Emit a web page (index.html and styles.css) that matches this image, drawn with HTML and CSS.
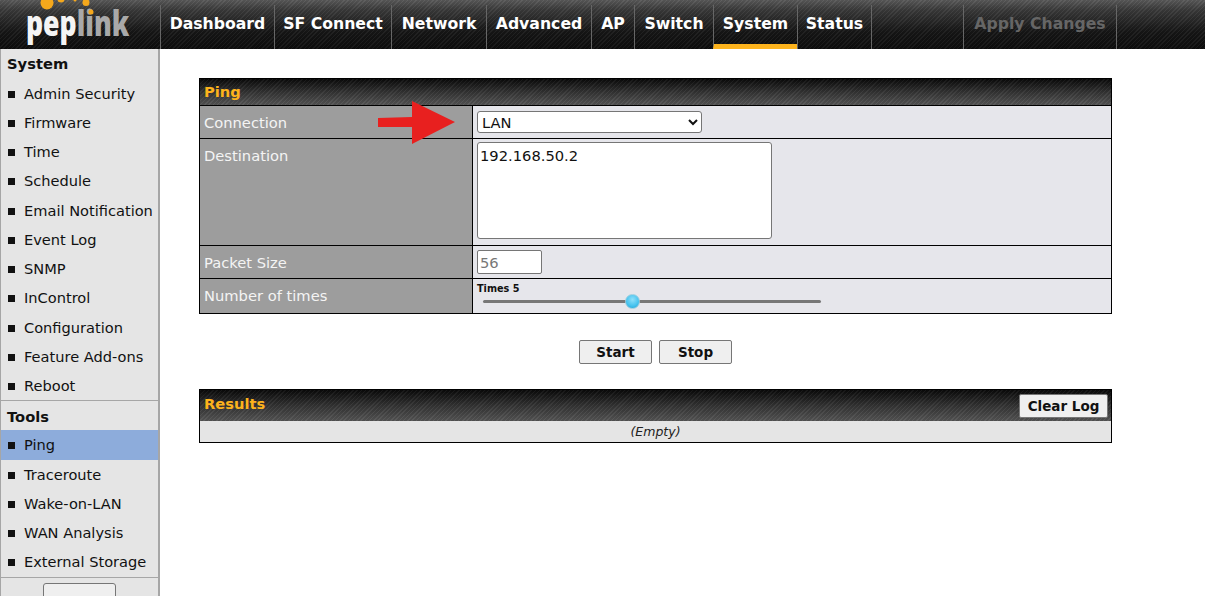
FILE: index.html
```html
<!DOCTYPE html>
<html lang="en">
<head>
<meta charset="utf-8">
<title>Ping</title>
<link rel="stylesheet" href="styles.css">
</head>
<body>
<header class="topbar">
  <div class="logo">
    <span class="logo-text"><span class="logo-pep">pep</span><span class="logo-link">link</span></span>
    <svg class="logo-dots" width="160" height="20" viewBox="0 0 160 20" aria-hidden="true">
      <circle cx="47" cy="3" r="6.5" fill="#f5a81c"/>
      <circle cx="61" cy="-1" r="3.5" fill="#f5a81c"/>
      <circle cx="75" cy="0" r="1.5" fill="#f5a81c"/>
      <circle cx="86" cy="2.5" r="3.5" fill="#f5a81c"/>
      <circle cx="91" cy="12" r="2.5" fill="#f5a81c"/>
    </svg>
  </div>
  <nav class="mainnav">
    <a class="navitem w-dash">Dashboard</a>
    <a class="navitem w-sf">SF Connect</a>
    <a class="navitem w-net">Network</a>
    <a class="navitem w-adv">Advanced</a>
    <a class="navitem w-ap">AP</a>
    <a class="navitem w-sw">Switch</a>
    <a class="navitem w-sys active">System</a>
    <a class="navitem w-st">Status</a>
    <span class="navgap"></span>
    <a class="navitem w-apply disabled">Apply Changes</a>
  </nav>
</header>
<div class="layout">
  <aside class="sidebar">
    <h3 class="side-head">System</h3>
    <ul class="side-list">
      <li>Admin Security</li>
      <li>Firmware</li>
      <li>Time</li>
      <li>Schedule</li>
      <li>Email Notification</li>
      <li>Event Log</li>
      <li>SNMP</li>
      <li>InControl</li>
      <li>Configuration</li>
      <li>Feature Add-ons</li>
      <li>Reboot</li>
    </ul>
    <h3 class="side-head ruled">Tools</h3>
    <ul class="side-list">
      <li class="current">Ping</li>
      <li>Traceroute</li>
      <li>Wake-on-LAN</li>
      <li>WAN Analysis</li>
      <li>External Storage</li>
    </ul>
    <div class="side-foot"><button class="side-btn" type="button"></button></div>
  </aside>
  <main class="content">
    <section class="panel">
      <div class="panel-title">Ping</div>
      <div class="row row-conn">
        <div class="label">Connection</div>
        <div class="field"><select class="select"><option>LAN</option></select></div>
      </div>
      <div class="row row-dest">
        <div class="label">Destination</div>
        <div class="field"><textarea class="textarea">192.168.50.2</textarea></div>
      </div>
      <div class="row row-size">
        <div class="label">Packet Size</div>
        <div class="field"><input class="input" type="text" value="56" disabled></div>
      </div>
      <div class="row row-times">
        <div class="label">Number of times</div>
        <div class="field field-slider">
          <div class="slider-label">Times 5</div>
          <div class="slider"><span class="slider-knob"></span></div>
        </div>
      </div>
      <svg class="arrow" width="78" height="44" viewBox="0 0 78 44" aria-hidden="true">
        <path d="M0 17 L34 16 L34 0 L77 21 L34 43 L34 26 L0 26 Z" fill="#e8201f"/>
      </svg>
    </section>
    <div class="actions">
      <button class="btn" type="button">Start</button>
      <button class="btn" type="button">Stop</button>
    </div>
    <section class="panel panel-results">
      <div class="panel-title title-results"><span class="results-text">Results</span><button class="btn btn-clear" type="button">Clear Log</button></div>
      <div class="empty">(Empty)</div>
    </section>
  </main>
</div>
</body>
</html>
```

FILE: styles.css
```css
* { box-sizing: border-box; }
html, body { margin: 0; height: 596px; overflow: hidden; background: #fff; }
body { font-family: "DejaVu Sans", Verdana, sans-serif; font-size: 14.7px; color: #111; }

.topbar {
  height: 49px;
  display: flex;
  background:
    repeating-linear-gradient(135deg, rgba(255,255,255,.05) 0 1px, rgba(0,0,0,.06) 1px 3px),
    linear-gradient(#5a5a5a, #3a3a3a 20%, #161616 65%, #0d0d0d);
}
.logo { width: 160px; position: relative; overflow: hidden; flex: none; }
.logo-dots { position: absolute; left: 0; top: 0; }
.logo-text {
  position: absolute;
  left: 26px;
  top: 0;
  font: 800 35px/46px "Open Sans", sans-serif;
  white-space: nowrap;
  transform: scaleX(.76);
  transform-origin: left center;
}
.logo-pep { color: #f4f4f4; }
.logo-link { color: #a9a9a9; }

.mainnav { flex: 1; display: flex; align-items: stretch; padding-top: 5px; }
.navitem {
  display: flex;
  align-items: center;
  justify-content: center;
  font-weight: 700;
  font-size: 15.7px;
  color: #fff;
  border-left: 1px solid #666;
  padding-bottom: 7px;
  white-space: nowrap;
}
.w-dash { width: 114px; }
.w-sf { width: 117px; }
.w-net { width: 95px; }
.w-adv { width: 105px; }
.w-ap { width: 43px; }
.w-sw { width: 79px; }
.w-sys { width: 84px; }
.w-st { width: 75px; border-right: 1px solid #666; }
.navgap { width: 91px; }
.w-apply { width: 154px; border-right: 1px solid #666; color: #666; }
.navitem.active { border-bottom: 5px solid #fdb31c; padding-bottom: 2px; }

.layout { display: flex; height: 547px; }
.sidebar {
  width: 160px;
  flex: none;
  background: #e5e5e5;
  border-left: 1px solid #a6a6a6;
  border-right: 2px solid #a6a6a6;
}
.side-head { margin: 0; padding: 0 6px; height: 29.5px; font-size: 14.7px; line-height: 30px; font-weight: 700; color: #111; }
.side-head.ruled { height: 30.1px; border-top: 1px solid #a6a6a6; line-height: 32px; }
.side-list { list-style: none; margin: 0; padding: 0; }
.side-list li { height: 29.25px; line-height: 29.25px; padding-left: 23px; position: relative; white-space: nowrap; font-size: 14.6px; }
.side-list li::before { content: ""; position: absolute; left: 7px; top: 12px; width: 7px; height: 7px; background: #111; }
.side-list li.current { background: #8dacdb; }
.side-foot { border-top: 1px solid #a6a6a6; display: flex; justify-content: center; padding-top: 5px; }
.side-btn { width: 73px; height: 24px; background: #efefef; border: 1px solid #767676; border-radius: 3px; }

.content { flex: 1; padding: 29px 93px 0 39px; }
.panel { border: 1px solid #000; position: relative; background: #e6e6eb; }
.panel-title {
  height: 26px;
  padding-left: 4px;
  font-size: 14.7px;
  font-weight: 700;
  line-height: 26px;
  color: #fdb31c;
  background:
    repeating-linear-gradient(135deg, rgba(255,255,255,.05) 0 1px, rgba(0,0,0,.06) 1px 3px),
    linear-gradient(#0a0a0a, #333 50%, #555);
}
.row { display: flex; border-top: 1px solid #000; }
.row-conn { height: 33px; }
.row-dest { height: 107px; }
.row-size { height: 33px; }
.row-times { height: 35px; }
.label { width: 273px; flex: none; background: #9d9d9d; color: #f4f4f4; border-right: 1px solid #000; padding: 0 4px; }
.row-conn .label, .row-size .label, .row-times .label { display: flex; align-items: center; }
.row-conn .label { padding-top: 1px; }
.row-times .label { padding-bottom: 2px; }
.row-dest .label { padding-top: 8px; }
.field { flex: 1; padding: 0 4px; display: flex; align-items: center; }
.row-dest .field { align-items: flex-start; padding-top: 3px; }
.select { width: 225px; height: 22px; font: 14.7px "DejaVu Sans", sans-serif; background: #fff; border: 1px solid #767676; border-radius: 3px; padding-left: 0; color: #111; }
.textarea { width: 295px; height: 97px; font: 14.7px "DejaVu Sans", sans-serif; border: 1px solid #767676; border-radius: 3px; padding: 4px 2px; resize: none; color: #111; display: block; }
.input { width: 65px; height: 24px; font: 14.7px "DejaVu Sans", sans-serif; border: 1px solid #767676; border-radius: 2px; padding: 1px 2px; background: #fff; color: #777; }
.field.field-slider { flex-direction: column; align-items: flex-start; padding-top: 4px; }
.slider-label { font-size: 9.7px; font-weight: 700; line-height: 12px; height: 14px; }
.slider { width: 338px; height: 3px; margin: 3px 0 0 6px; background: #777; border-radius: 2px; position: relative; }
.slider-knob { position: absolute; left: 142px; top: -6px; width: 15px; height: 15px; border-radius: 50%; background: radial-gradient(circle at 50% 35%, #8fe0fa, #45c2ee 60%, #1f9dd2); border: 1px solid #9ccfe0; }
.arrow { position: absolute; left: 178px; top: 22px; }

.actions { display: flex; justify-content: center; gap: 7px; margin-top: 26px; height: 24px; }
.btn { width: 73px; height: 24px; padding: 0; font: 700 13.5px "DejaVu Sans", sans-serif; color: #111; background: #efefef; border: 1px solid #767676; border-radius: 2px; }
.panel-results { margin-top: 25px; background: #e5e5e5; }
.title-results { height: 31px; display: flex; justify-content: space-between; align-items: center; padding-right: 3px; padding-bottom: 3px; line-height: normal; }
.results-text { margin-bottom: 2px; }
.btn-clear { width: 89px; margin-top: 4px; flex: none; }
.empty { height: 21px; font-size: 12.5px; font-style: italic; line-height: 22px; text-align: center; color: #222; }
```
